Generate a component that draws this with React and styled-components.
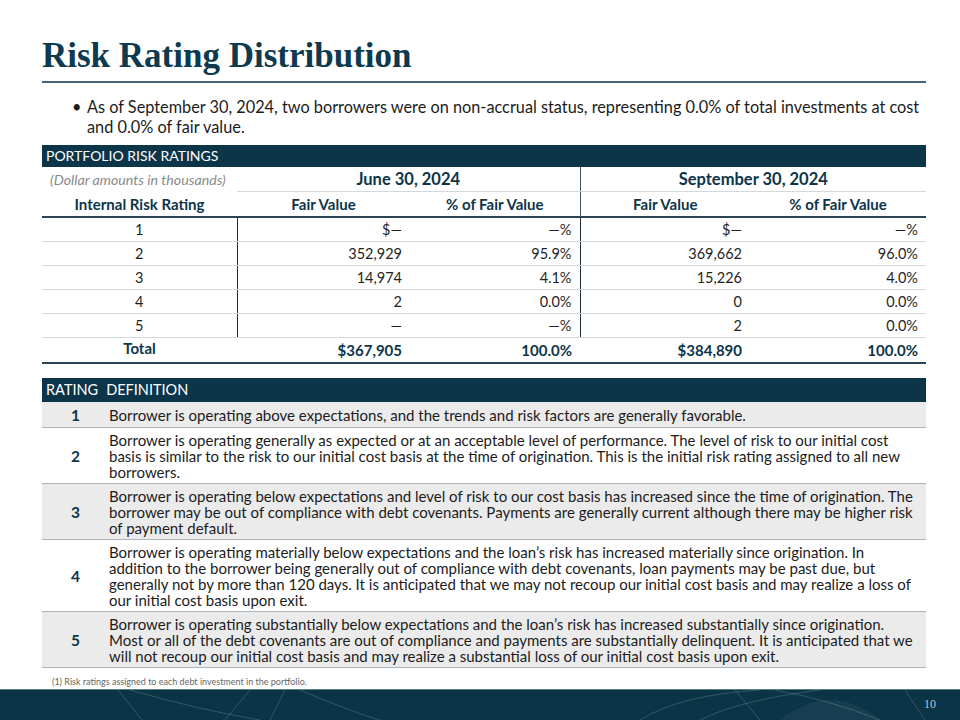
import React from "react";
import styled, { createGlobalStyle } from "styled-components";

const GlobalStyle = createGlobalStyle`
  html, body {
    margin: 0;
    padding: 0;
    background: #ffffff;
  }
  body {
    font-family: Lato, "Noto Sans", sans-serif;
    color: #1c1c1c;
  }
`;

const Slide = styled.div`
  width: 960px;
  height: 720px;
  display: flex;
  flex-direction: column;
  overflow: hidden;
  background: #fff;
`;

const Content = styled.div`
  flex: 1;
  min-height: 0;
  overflow: hidden;
  padding: 0 34px 0 42px;
  display: flex;
  flex-direction: column;
`;

const Title = styled.h1`
  margin: 36px 0 0;
  font-family: "Liberation Serif", serif;
  font-weight: 700;
  font-size: 35px;
  line-height: 40px;
  color: #0d3a4f;
  padding-bottom: 5px;
  border-bottom: 2px solid #46657a;
`;

const Bullets = styled.ul`
  margin: 14px 0 0;
  padding: 0 0 0 45px;
  list-style: none;
`;

const Bullet = styled.li`
  position: relative;
  font-size: 16.3px;
  line-height: 19.5px;
  color: #1c1c1c;
  &::before {
    content: "•";
    position: absolute;
    left: -15px;
  }
`;

const SectionBar = styled.div`
  background: #0d3549;
  color: #fff;
  font-size: ${(p) => p.$size}px;
  height: ${(p) => p.$h}px;
  line-height: ${(p) => p.$h}px;
  padding-left: 4px;
  margin-top: ${(p) => p.$top}px;
  display: flex;
  gap: 8px;
  flex-shrink: 0;
`;

const Table = styled.table`
  width: 100%;
  border-collapse: collapse;
  table-layout: fixed;
  font-size: 14.5px;
  color: #1f1f1f;
`;

const Cell = styled.td`
  height: 23px;
  padding: 0 ${(p) => (p.$align === "right" ? 8 : 0)}px 0 0;
  text-align: ${(p) => p.$align || "center"};
  border-bottom: 1px solid #d3d8dc;
  border-left: ${(p) => (p.$divider ? "1.5px solid #1f2d36" : "none")};
  vertical-align: middle;
`;

const HeadCell = styled.th`
  height: 24px;
  padding: 0;
  font-weight: 700;
  font-size: ${(p) => (p.$big ? 16.5 : 15)}px;
  color: #0d3549;
  text-align: center;
  border-bottom: ${(p) => p.$bottom || "none"};
  border-left: ${(p) => (p.$divider ? "1px solid #3c5566" : "none")};
`;

const Note = styled.th`
  font-weight: 400;
  font-style: italic;
  font-size: 14.2px;
  color: #8a8a8a;
  text-align: left;
  padding-left: 8px;
`;

const TotalCell = styled.td`
  height: 20px;
  padding: 0 ${(p) => (p.$align === "right" ? 8 : 0)}px
    ${(p) => (p.$lift ? 4 : 0)}px 0;
  text-align: ${(p) => p.$align || "center"};
  font-weight: 700;
  font-size: 15px;
  color: #0d3549;
  border-bottom: 2px solid #2b4555;
  border-top: 1.5px solid #2b4555;
`;

const DefRow = styled.div`
  display: grid;
  grid-template-columns: 67px 1fr;
  align-items: center;
  background: ${(p) => (p.$shade ? "#ebebeb" : "#ffffff")};
  border-bottom: 1px solid #aab6bf;
  padding: 4px 0 3px;
  flex-shrink: 0;
`;

const DefNum = styled.div`
  text-align: center;
  font-weight: 700;
  font-size: 15.5px;
  color: #0d3549;
`;

const DefText = styled.div`
  font-size: 15px;
  line-height: 16px;
  color: #1c1c1c;
  padding-right: 9px;
`;

const Footnote = styled.div`
  margin-top: 8px;
  padding-left: 10px;
  font-size: 9px;
  line-height: 11px;
  color: #666;
  flex-shrink: 0;
`;

const Footer = styled.div`
  height: 30px;
  flex-shrink: 0;
  position: relative;
  background: #0b3447;
  border-top: 1px solid #5d7b8c;
  overflow: hidden;
`;

const PageNum = styled.span`
  position: absolute;
  right: 24px;
  top: 7px;
  font-family: "Liberation Serif", serif;
  font-size: 12px;
  color: #b6c3cb;
`;

const rows = [
  ["1", "$—", "—%", "$—", "—%"],
  ["2", "352,929", "95.9%", "369,662", "96.0%"],
  ["3", "14,974", "4.1%", "15,226", "4.0%"],
  ["4", "2", "0.0%", "0", "0.0%"],
  ["5", "—", "—%", "2", "0.0%"],
];

const defs = [
  ["1", "Borrower is operating above expectations, and the trends and risk factors are generally favorable."],
  ["2", "Borrower is operating generally as expected or at an acceptable level of performance. The level of risk to our initial cost basis is similar to the risk to our initial cost basis at the time of origination. This is the initial risk rating assigned to all new borrowers."],
  ["3", "Borrower is operating below expectations and level of risk to our cost basis has increased since the time of origination. The borrower may be out of compliance with debt covenants. Payments are generally current although there may be higher risk of payment default."],
  ["4", "Borrower is operating materially below expectations and the loan’s risk has increased materially since origination. In addition to the borrower being generally out of compliance with debt covenants, loan payments may be past due, but generally not by more than 120 days. It is anticipated that we may not recoup our initial cost basis and may realize a loss of our initial cost basis upon exit."],
  ["5", "Borrower is operating substantially below expectations and the loan’s risk has increased substantially since origination. Most or all of the debt covenants are out of compliance and payments are substantially delinquent. It is anticipated that we will not recoup our initial cost basis and may realize a substantial loss of our initial cost basis upon exit."],
];

const FooterArt = () => (
  <svg width="960" height="30" viewBox="0 0 960 30" style={{ position: "absolute", left: 0, top: 0 }}>
    <g fill="none" stroke="#7d98a8" strokeOpacity="0.35" strokeWidth="1">
      <path d="M118 0 L142 30" />
      <path d="M250 0 L225 30" />
      <path d="M285 0 L270 30" />
      <path d="M130 0 Q200 20 260 30" />
      <path d="M300 0 Q360 25 380 30" />
      <path d="M640 30 Q680 5 760 0" />
      <path d="M700 30 Q740 10 820 0" />
      <path d="M735 0 L760 30" />
      <path d="M775 0 Q830 10 880 30" />
      <path d="M905 0 L925 30" />
    </g>
    <path d="M780 30 Q830 -10 880 30 Z" fill="#ffffff" fillOpacity="0.05" />
  </svg>
);

export default function App() {
  return (
    <Slide>
      <GlobalStyle />
      <Content>
        <Title>Risk Rating Distribution</Title>
        <Bullets>
          <Bullet>
            As of September 30, 2024, two borrowers were on non-accrual status, representing 0.0% of total investments at cost and 0.0% of fair value.
          </Bullet>
        </Bullets>

        <SectionBar $top={9} $size={14} $h={22}>PORTFOLIO RISK RATINGS</SectionBar>
        <Table>
          <colgroup>
            <col style={{ width: 195 }} />
            <col style={{ width: 173 }} />
            <col style={{ width: 170 }} />
            <col style={{ width: 170 }} />
            <col />
          </colgroup>
          <thead>
            <tr>
              <Note>(Dollar amounts in thousands)</Note>
              <HeadCell colSpan={2} $big $bottom="1px solid #d3d8dc">June 30, 2024</HeadCell>
              <HeadCell colSpan={2} $big $divider $bottom="1px solid #d3d8dc">September 30, 2024</HeadCell>
            </tr>
            <tr>
              <HeadCell $bottom="2px solid #2b4555">Internal Risk Rating</HeadCell>
              <HeadCell $bottom="2px solid #2b4555">Fair Value</HeadCell>
              <HeadCell $bottom="2px solid #2b4555">% of Fair Value</HeadCell>
              <HeadCell $divider $bottom="2px solid #2b4555">Fair Value</HeadCell>
              <HeadCell $bottom="2px solid #2b4555">% of Fair Value</HeadCell>
            </tr>
          </thead>
          <tbody>
            {rows.map((r) => (
              <tr key={r[0]}>
                <Cell>{r[0]}</Cell>
                <Cell $align="right" $divider>{r[1]}</Cell>
                <Cell $align="right">{r[2]}</Cell>
                <Cell $align="right" $divider>{r[3]}</Cell>
                <Cell $align="right">{r[4]}</Cell>
              </tr>
            ))}
            <tr>
              <TotalCell $lift>Total</TotalCell>
              <TotalCell $align="right">$367,905</TotalCell>
              <TotalCell $align="right">100.0%</TotalCell>
              <TotalCell $align="right">$384,890</TotalCell>
              <TotalCell $align="right">100.0%</TotalCell>
            </tr>
          </tbody>
        </Table>

        <SectionBar $top={14} $size={14.5} $h={24}>
          <span>RATING</span>
          <span>DEFINITION</span>
        </SectionBar>
        {defs.map(([n, t], i) => (
          <DefRow key={n} $shade={i % 2 === 0}>
            <DefNum>{n}</DefNum>
            <DefText>{t}</DefText>
          </DefRow>
        ))}
        <Footnote>(1) Risk ratings assigned to each debt investment in the portfolio.</Footnote>
      </Content>
      <Footer>
        <FooterArt />
        <PageNum>10</PageNum>
      </Footer>
    </Slide>
  );
}
